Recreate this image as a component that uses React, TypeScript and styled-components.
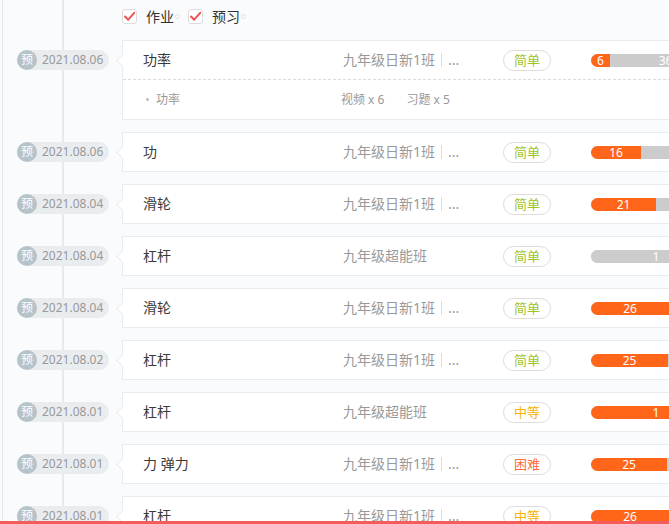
import React from "react";
import styled, { createGlobalStyle } from "styled-components";

const GlobalStyle = createGlobalStyle`
  html, body {
    margin: 0;
    padding: 0;
    overflow: hidden;
    background: #fafbfc;
    font-family: "Noto Sans", "Noto Sans CJK SC", sans-serif;
  }
  * { box-sizing: border-box; }
`;

const Page = styled.div`
  height: 100vh;
  display: flex;
  flex-direction: column;
`;

const Main = styled.div`
  flex: 1;
  overflow: hidden;
  margin-left: 2px;
  border-left: 1px solid #e4e6e9;
  position: relative;
  &::before {
    content: "";
    position: absolute;
    left: 59px;
    top: 0;
    bottom: 0;
    width: 2px;
    background: #e6e9ec;
    z-index: 0;
  }
`;

const BottomBar = styled.div`
  height: 3px;
  background: #f45b5b;
  flex: none;
`;

const FilterBar = styled.div`
  height: 33px;
  padding-left: 119px;
  display: flex;
  align-items: center;
  gap: 8px;
  position: relative;
  z-index: 1;
`;

const CheckItem = styled.label`
  display: inline-flex;
  align-items: center;
  font-size: 14px;
  line-height: 18px;
  color: #333;
`;

const CheckBox = styled.span`
  width: 15px;
  height: 15px;
  border: 1px solid #dcdcdc;
  border-radius: 3px;
  background: #fff;
  display: inline-flex;
  align-items: center;
  justify-content: center;
  margin-right: 9px;
`;

const Ghost = styled.span`
  width: 5px;
  height: 5px;
  border: 1px solid #e2e2e2;
  border-radius: 50%;
  margin-left: 1px;
`;

const List = styled.div`
  margin-top: 7px;
  display: flex;
  flex-direction: column;
  gap: 12px;
  position: relative;
  z-index: 1;
`;

const Row = styled.div`
  display: grid;
  grid-template-columns: 119px 1fr;
  align-items: start;
`;

const DateCell = styled.div`
  height: 40px;
  display: flex;
  align-items: center;
  padding-left: 14px;
`;

const DatePill = styled.div`
  display: inline-flex;
  align-items: center;
  height: 20px;
  border-radius: 10px;
  background: #e9edf0;
  padding-right: 6px;
`;

const PreBadge = styled.span`
  width: 20px;
  height: 20px;
  border-radius: 50%;
  background: #b5c3cb;
  color: #fff;
  font-size: 12px;
  line-height: 20px;
  text-align: center;
`;

const DateText = styled.span`
  margin-left: 5px;
  font-size: 12px;
  line-height: 20px;
  color: #999;
`;

const Card = styled.div`
  position: relative;
  width: 760px;
  background: #fff;
  border: 1px solid #e8ebef;
  &::before {
    content: "";
    position: absolute;
    left: -5px;
    top: 15px;
    width: 8px;
    height: 8px;
    background: #fff;
    border-left: 1px solid #e8ebef;
    border-bottom: 1px solid #e8ebef;
    transform: rotate(45deg);
  }
`;

const MainLine = styled.div`
  height: 38px;
  padding-left: 20px;
  display: grid;
  grid-template-columns: 200px 160px 88px 130px;
  align-items: center;
`;

const Title = styled.div`
  font-size: 14px;
  line-height: 20px;
  color: #3a3a3a;
  white-space: nowrap;
`;

const ClassName = styled.div`
  font-size: 14px;
  line-height: 20px;
  color: #999;
  display: flex;
  align-items: center;
  white-space: nowrap;
`;

const Sep = styled.span`
  width: 1px;
  height: 14px;
  background: #dedede;
  margin: 0 6px;
`;

const levelColors: Record<string, string> = {
  简单: "#9fc41f",
  中等: "#f5b200",
  困难: "#ff6e3a",
};

const Tag = styled.span<{ $color: string }>`
  width: 48px;
  height: 21px;
  border: 1px solid #dcdcdc;
  border-radius: 11px;
  font-size: 13px;
  line-height: 19px;
  text-align: center;
  color: ${(p) => p.$color};
  margin-top: 1px;
`;

const Bar = styled.div`
  width: 130px;
  height: 13px;
  display: flex;
  border-radius: 7px 0 0 7px;
  overflow: hidden;
  background: #cccccc;
`;

const BarPart = styled.span<{ $done?: boolean }>`
  height: 13px;
  background: ${(p) => (p.$done ? "#ff661a" : "#cccccc")};
  color: #fff;
  font-size: 12px;
  line-height: 13px;
  text-align: center;
  white-space: nowrap;
  overflow: hidden;
  flex: none;
`;

const SubLine = styled.div`
  height: 40px;
  border-top: 1px dashed #d8dbe0;
  padding-left: 23px;
  display: grid;
  grid-template-columns: 195px auto auto 1fr;
  align-items: center;
  font-size: 12px;
  line-height: 16px;
  color: #999;
`;

const SubTitle = styled.span`
  display: inline-flex;
  align-items: center;
`;

const Dot = styled.span`
  width: 3px;
  height: 3px;
  border-radius: 50%;
  background: #bbb;
  margin-right: 7px;
`;

const Stat = styled.span<{ $gap?: number }>`
  margin-left: ${(p) => p.$gap ?? 0}px;
  white-space: nowrap;
`;

type Item = {
  date: string;
  title: string;
  cls: string;
  more: boolean;
  level: string;
  done: number;
  doneW: number;
  rest?: string;
  expanded?: boolean;
};

const items: Item[] = [
  { date: "2021.08.06", title: "功率", cls: "九年级日新1班", more: true, level: "简单", done: 6, doneW: 19, rest: "36", expanded: true },
  { date: "2021.08.06", title: "功", cls: "九年级日新1班", more: true, level: "简单", done: 16, doneW: 50 },
  { date: "2021.08.04", title: "滑轮", cls: "九年级日新1班", more: true, level: "简单", done: 21, doneW: 65 },
  { date: "2021.08.04", title: "杠杆", cls: "九年级超能班", more: false, level: "简单", done: 0, doneW: 0, rest: "1" },
  { date: "2021.08.04", title: "滑轮", cls: "九年级日新1班", more: true, level: "简单", done: 26, doneW: 78 },
  { date: "2021.08.02", title: "杠杆", cls: "九年级日新1班", more: true, level: "简单", done: 25, doneW: 77 },
  { date: "2021.08.01", title: "杠杆", cls: "九年级超能班", more: false, level: "中等", done: 1, doneW: 130 },
  { date: "2021.08.01", title: "力 弹力", cls: "九年级日新1班", more: true, level: "困难", done: 25, doneW: 76 },
  { date: "2021.08.01", title: "杠杆", cls: "九年级日新1班", more: true, level: "中等", done: 26, doneW: 78 },
];

const Check = () => (
  <svg width="13" height="13" viewBox="0 0 13 13">
    <path d="M2 6.5 L5.2 9.7 L11.2 2.8" fill="none" stroke="#f25252" strokeWidth="2" strokeLinecap="round" strokeLinejoin="round" />
  </svg>
);

export default function App() {
  return (
    <>
      <GlobalStyle />
      <Page>
        <Main>
          <FilterBar>
            <CheckItem>
              <CheckBox><Check /></CheckBox>作业<Ghost />
            </CheckItem>
            <CheckItem>
              <CheckBox><Check /></CheckBox>预习<Ghost />
            </CheckItem>
          </FilterBar>
          <List>
            {items.map((it, i) => (
              <Row key={i}>
                <DateCell>
                  <DatePill>
                    <PreBadge>预</PreBadge>
                    <DateText>{it.date}</DateText>
                  </DatePill>
                </DateCell>
                <Card>
                  <MainLine>
                    <Title>{it.title}</Title>
                    <ClassName>
                      {it.cls}
                      {it.more && (
                        <>
                          <Sep />
                          ...
                        </>
                      )}
                    </ClassName>
                    <Tag $color={levelColors[it.level]}>{it.level}</Tag>
                    <Bar>
                      {it.doneW > 0 && (
                        <BarPart $done style={{ width: it.doneW }}>
                          {it.done}
                        </BarPart>
                      )}
                      {it.doneW < 130 && (
                        <BarPart style={{ width: 130 - it.doneW }}>{it.rest ?? ""}</BarPart>
                      )}
                    </Bar>
                  </MainLine>
                  {it.expanded && (
                    <SubLine>
                      <SubTitle>
                        <Dot />
                        功率
                      </SubTitle>
                      <Stat>视频 x 6</Stat>
                      <Stat $gap={22}>习题 x 5</Stat>
                    </SubLine>
                  )}
                </Card>
              </Row>
            ))}
          </List>
        </Main>
        <BottomBar />
      </Page>
    </>
  );
}
